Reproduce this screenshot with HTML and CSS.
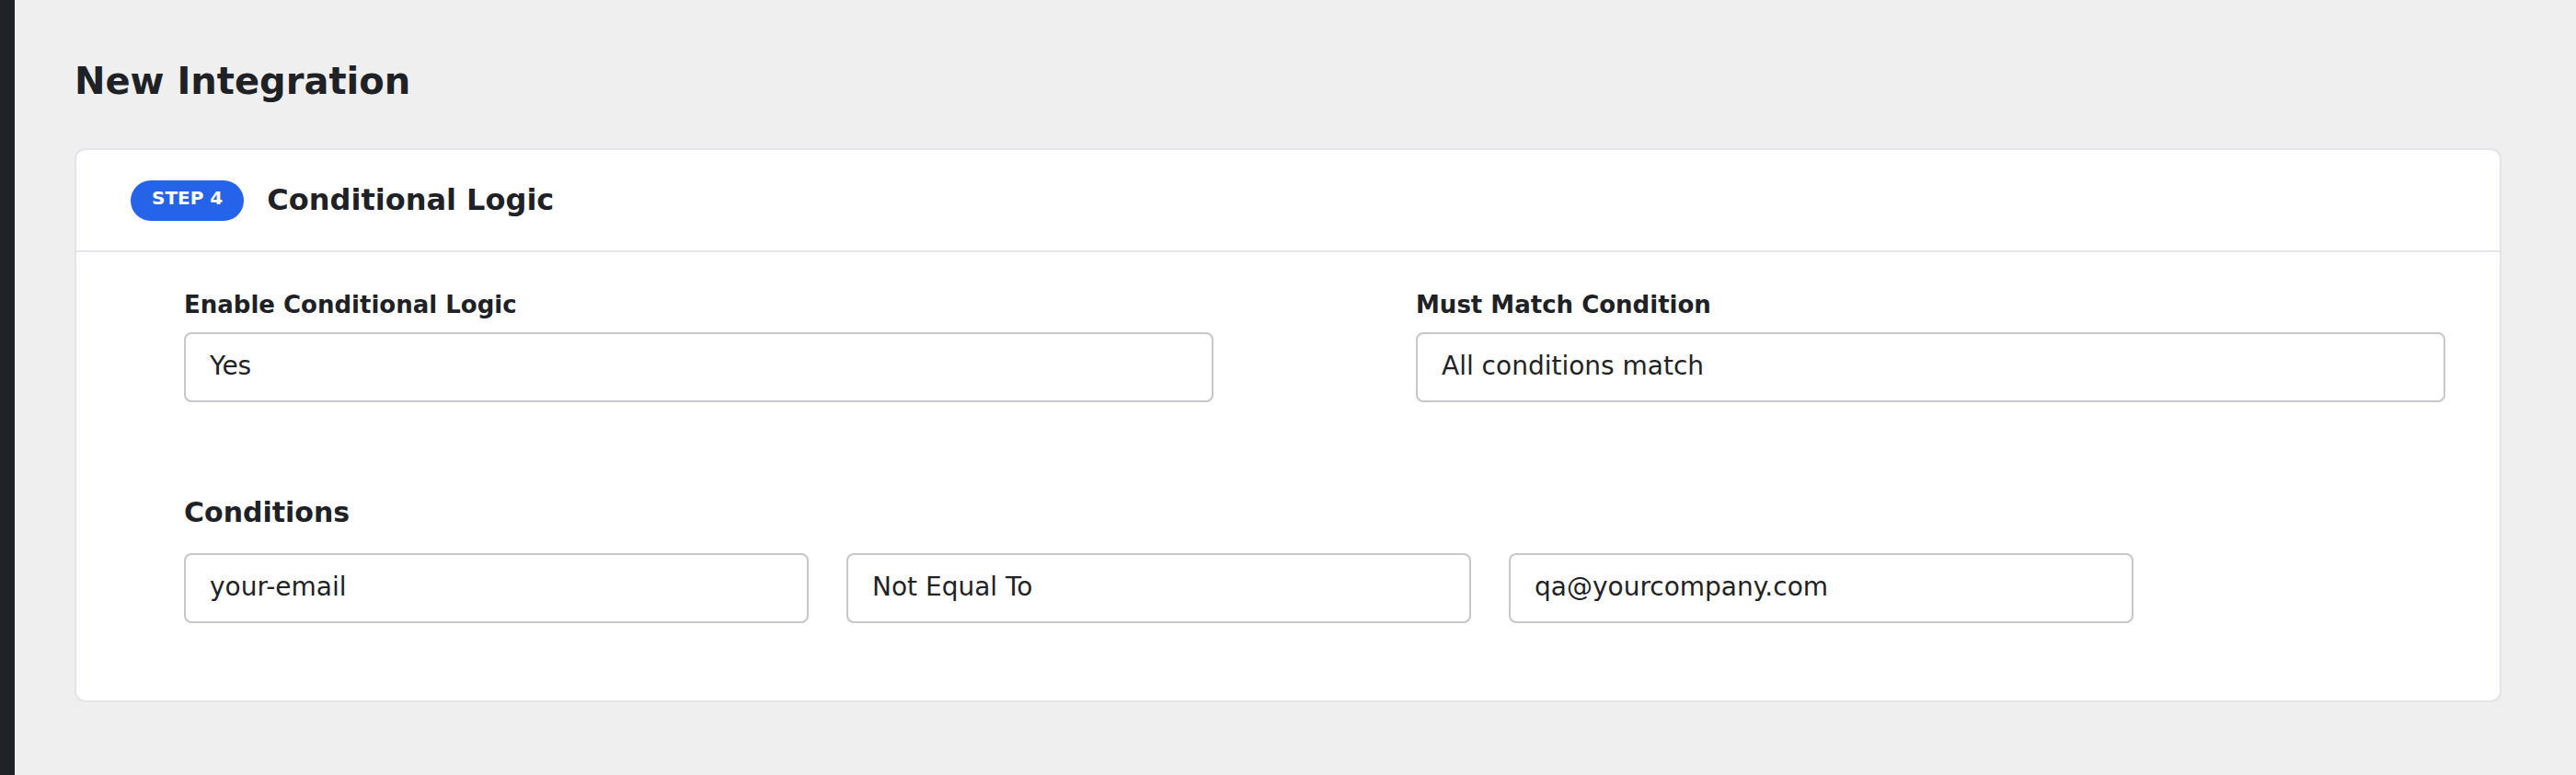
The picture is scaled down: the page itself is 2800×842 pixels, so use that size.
FILE: index.html
```html
<!DOCTYPE html>
<html lang="en">
<head>
<meta charset="utf-8">
<title>New Integration</title>
<link rel="stylesheet" href="styles.css">
</head>
<body>
<div class="layout">
  <aside class="sidebar"></aside>
  <main class="main">
    <h1 class="page-title">New Integration</h1>
    <section class="card">
      <header class="card-header">
        <span class="step-badge">STEP 4</span>
        <h2 class="card-title">Conditional Logic</h2>
      </header>
      <div class="card-body">
        <div class="field-grid">
          <div class="field">
            <div class="field-label">Enable Conditional Logic</div>
            <div class="field-control">Yes</div>
          </div>
          <div class="field">
            <div class="field-label">Must Match Condition</div>
            <div class="field-control">All conditions match</div>
          </div>
        </div>
        <h3 class="section-title">Conditions</h3>
        <div class="condition-row">
          <div class="field-control cond">your-email</div>
          <div class="field-control cond">Not Equal To</div>
          <div class="field-control cond">qa@yourcompany.com</div>
        </div>
      </div>
    </section>
  </main>
</div>
</body>
</html>
```
FILE: styles.css
```css
html, body {
  margin: 0;
  padding: 0;
  height: 100%;
}

body {
  background: #efefef;
  font-family: "DejaVu Sans", "Noto Sans", sans-serif;
  color: #1f2226;
}

.layout {
  display: flex;
  min-height: 100vh;
}

.sidebar {
  width: 16px;
  flex: 0 0 16px;
  background: #1f2327;
}

.main {
  flex: 1;
  padding: 65px 81px 0 65px;
}

.page-title {
  margin: 0 0 49px;
  font-size: 40px;
  font-weight: 700;
  line-height: 47px;
  color: #1e2125;
}

.card {
  background: #ffffff;
  border: 2px solid #e4e4e8;
  border-radius: 12px;
}

.card-header {
  display: flex;
  align-items: center;
  gap: 25px;
  height: 109px;
  padding: 0 59px;
  border-bottom: 2px solid #e6e6ea;
}

.step-badge {
  display: inline-block;
  padding: 7px 23px 13px;
  line-height: 24px;
  font-size: 20px;
  font-weight: 700;
  color: #ffffff;
  background: #2563eb;
  border-radius: 22px;
}

.card-title {
  margin: 0;
  font-size: 32px;
  font-weight: 700;
  line-height: 37px;
  color: #1e2125;
}

.card-body {
  padding: 42px 59px 84px 117px;
}

.field-grid {
  display: grid;
  grid-template-columns: 1fr 1fr;
  column-gap: 220px;
}

.field-label {
  font-size: 26px;
  font-weight: 700;
  line-height: 30px;
  margin-bottom: 15px;
  color: #1e2125;
}

.field-control {
  display: flex;
  align-items: center;
  box-sizing: border-box;
  height: 76px;
  padding: 0 26px 4px;
  border: 2px solid #c6c6cb;
  border-radius: 8px;
  background: #ffffff;
  font-size: 28px;
  line-height: 33px;
  color: #1f2226;
}

.section-title {
  margin: 102px 0 27px;
  font-size: 30px;
  font-weight: 700;
  line-height: 35px;
  color: #1e2125;
}

.condition-row {
  display: flex;
  gap: 41px;
}

.cond {
  width: 679px;
  flex: 0 0 679px;
}
```
